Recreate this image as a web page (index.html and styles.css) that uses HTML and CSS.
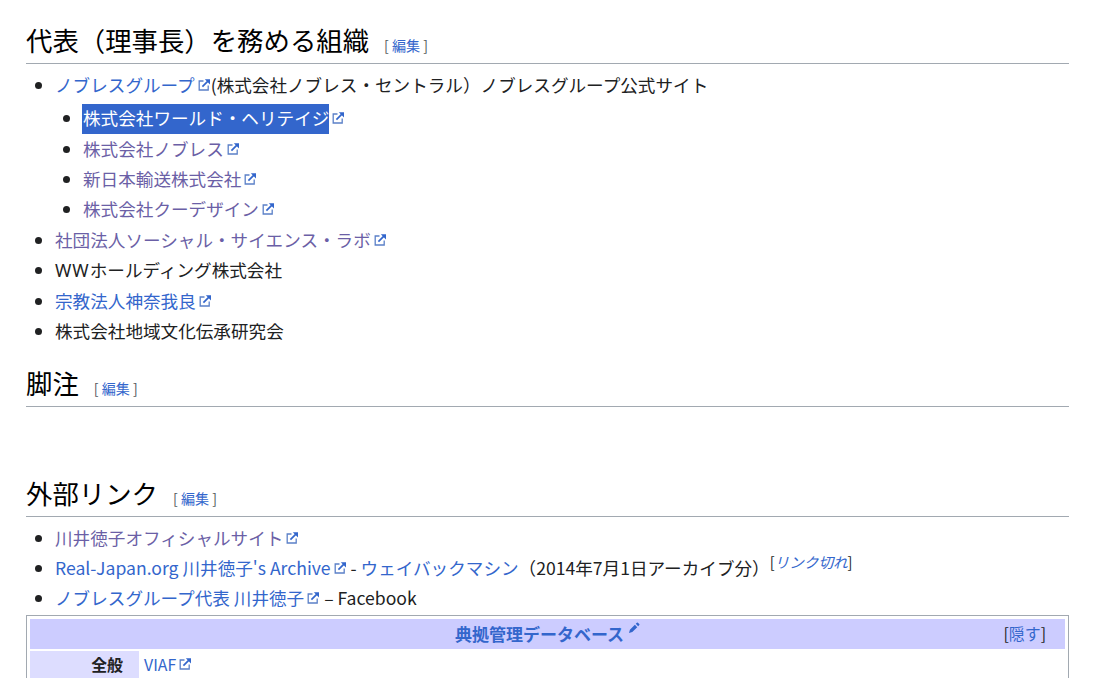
FILE: index.html
```html
<!DOCTYPE html>
<html lang="ja">
<head>
<meta charset="utf-8">
<title>川井徳子</title>
<link rel="stylesheet" href="styles.css">
</head>
<body>
<svg class="defs" width="0" height="0" aria-hidden="true">
  <symbol id="ext" viewBox="0 0 14 14">
    <path fill="none" stroke="#5b80c8" stroke-width="1.3" d="M6.5 3H2.2v9h9V7.6"/>
    <path fill="none" stroke="#3366cc" stroke-width="1.7" d="M5.4 8.7 11.4 2.7"/>
    <path fill="#3366cc" d="M7.8 1.2h5.2v5.2z"/>
  </symbol>
</svg>
<main class="content">
  <h2 class="heading first">代表（理事長）を務める組織<span class="edit">[ <a>編集</a> ]</span></h2>
  <ul class="list">
    <li><a class="ext">ノブレスグループ<svg class="ei"><use href="#ext"/></svg></a>(株式会社ノブレス・セントラル）ノブレスグループ公式サイト
      <ul class="sublist">
        <li><a class="sel">株式会社ワールド・ヘリテイジ</a><svg class="ei"><use href="#ext"/></svg></li>
        <li><a class="visited">株式会社ノブレス<svg class="ei"><use href="#ext"/></svg></a></li>
        <li><a class="visited">新日本輸送株式会社<svg class="ei"><use href="#ext"/></svg></a></li>
        <li><a class="visited">株式会社クーデザイン<svg class="ei"><use href="#ext"/></svg></a></li>
      </ul>
    </li>
    <li><a class="visited">社団法人ソーシャル・サイエンス・ラボ<svg class="ei"><use href="#ext"/></svg></a></li>
    <li><span class="ww">WW</span>ホールディング株式会社</li>
    <li><a class="ext">宗教法人神奈我良<svg class="ei"><use href="#ext"/></svg></a></li>
    <li>株式会社地域文化伝承研究会</li>
  </ul>
  <h2 class="heading notes">脚注<span class="edit">[ <a>編集</a> ]</span></h2>
  <h2 class="heading links">外部リンク<span class="edit">[ <a>編集</a> ]</span></h2>
  <ul class="list second">
    <li><a class="visited">川井徳子オフィシャルサイト<svg class="ei"><use href="#ext"/></svg></a></li>
    <li><a class="ext">Real-Japan.org 川井徳子's Archive<svg class="ei"><use href="#ext"/></svg></a> - <a class="ext">ウェイバックマシン</a>（2014年7月1日アーカイブ分）<sup class="dead">[<a><i>リンク切れ</i></a>]</sup></li>
    <li><a class="ext">ノブレスグループ代表 川井徳子<svg class="ei"><use href="#ext"/></svg></a> – Facebook</li>
  </ul>
  <div class="navbox">
    <div class="nav-title">
      <span class="nav-name"><a>典拠管理データベース</a><svg class="pencil" viewBox="0 0 12 12"><path fill="#3366cc" d="M0 12l1-3.6L6.4 3l2.6 2.6L3.6 11zM7.4 2l1.2-1.2a.8.8 0 0 1 1.1 0l1.5 1.5a.8.8 0 0 1 0 1.1L10 4.6z"/></svg></span>
      <span class="nav-toggle">[<a>隠す</a>]</span>
    </div>
    <div class="nav-row">
      <div class="nav-group">全般</div>
      <div class="nav-cell"><a class="ext">VIAF<svg class="ei"><use href="#ext"/></svg></a></div>
    </div>
  </div>
</main>
</body>
</html>
```
FILE: styles.css
```css
html, body {
  margin: 0;
  height: 678px;
  overflow: hidden;
  background: #fff;
}
body {
  font-family: "Noto Sans CJK JP", "Noto Sans", sans-serif;
  font-size: 17.6px;
  color: #202122;
}
.defs { position: absolute; }
.content {
  padding: 0 35px 0 26px;
}
a { color: #3366cc; text-decoration: none; }
a.visited { color: #6b5fa6; }
.ww {
  font-family: "Noto Sans", sans-serif;
  letter-spacing: 1px;
}
.heading {
  margin: 0;
  font-weight: 400;
  font-size: 26.4px;
  line-height: 35px;
  color: #000;
  border-bottom: 1px solid #a2a9b1;
}
.heading.first { margin-top: 22px; }
.heading.notes { margin-top: 20px; }
.heading.links { margin-top: 68px; }
.edit {
  font-size: 14.08px;
  margin-left: 15px;
  color: #54595d;
}
.list {
  list-style: disc;
  margin: 7px 0 0;
  padding: 0 0 0 29px;
}
.list.second { margin-top: 6.6px; }
.list > li, .sublist > li {
  line-height: 28px;
  margin-bottom: 2.4px;
}
.sublist {
  list-style: disc;
  margin: 5.3px 0 0;
  padding: 0 0 0 28px;
}
.sel {
  background: #3366cc;
  color: #fff;
  display: inline-block;
  line-height: 27px;
  padding: 0 0 3px 1px;
  margin: 0 0 -2px -1px;
}
.ei {
  width: 14px;
  height: 14px;
  margin-left: 2px;
  vertical-align: 0;
}
.dead {
  font-size: 14.6px;
  line-height: 0;
  vertical-align: 7px;
}
.navbox {
  margin-top: 0;
  border: 1px solid #a2a9b1;
  padding: 3px;
}
.nav-title {
  background: #ccccff;
  height: 30px;
  display: flex;
  align-items: center;
  justify-content: center;
  position: relative;
  font-weight: 700;
  font-size: 17px;
  line-height: 30px;
}
.pencil {
  width: 11px;
  height: 11px;
  vertical-align: 8px;
  margin-left: 5px;
}
.nav-toggle {
  position: absolute;
  right: 19px;
  font-weight: 400;
  font-size: 15.9px;
}
.nav-row {
  display: flex;
  margin-top: 2px;
}
.nav-group {
  width: 93px;
  background: #ddddff;
  font-weight: 700;
  font-size: 15.9px;
  text-align: right;
  padding-right: 16px;
  line-height: 28px;
}
.nav-cell {
  padding-left: 5px;
  font-size: 15.9px;
  line-height: 28px;
}
```
